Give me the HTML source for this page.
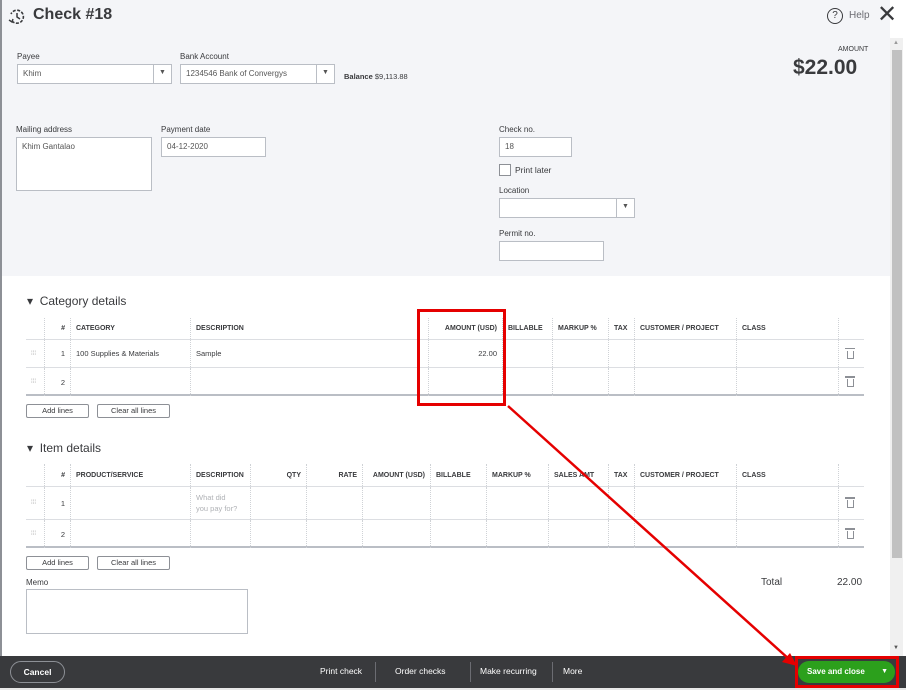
<!DOCTYPE html>
<html><head><meta charset="utf-8"><style>
*{box-sizing:border-box;margin:0;padding:0}
body{width:906px;height:690px;overflow:hidden;background:#fff;font-family:"Liberation Sans",sans-serif;color:#393a3d;position:relative}
.a{position:absolute}
.lbl{position:absolute;font-size:8px;color:#393a3d}
.inp{position:absolute;background:#fff;border:1px solid #babec5;font-size:8px;color:#555;padding:4px 5px}
.dd{position:absolute;top:0;right:0;width:18px;height:100%;border-left:1px solid #babec5;font-size:7px;text-align:center;padding-top:4px}
.tbl{position:absolute;left:26px;width:838px}
.cell{position:absolute;border-left:1px dotted #cfd2d6;height:100%;font-size:7.5px;padding:0 5px;display:flex;align-items:center}
.hd{font-weight:bold;font-size:7px}
.row{position:absolute;left:0;width:838px;border-bottom:1px solid #dcdee2}
.btn{position:absolute;border:1px solid #8d9096;border-radius:2px;font-size:7.5px;text-align:center;line-height:12px;height:14px;background:#fff}
.trash{position:absolute;right:10px;width:7px;height:8px;border:1.5px solid #8d9096;border-top:none;top:50%;margin-top:-3px}
.trash:before{content:"";position:absolute;left:-3px;top:-3px;width:10px;height:1.5px;background:#8d9096}
</style></head><body>
<div class="a" style="left:0;top:0;width:890px;height:276px;background:#f4f5f8"></div>
<div class="a" style="left:0;top:0;width:2px;height:656px;background:#8d9096"></div>
<!-- header -->
<svg class="a" style="left:8px;top:8px" width="18" height="18" viewBox="0 0 18 18"><path d="M4 13 A6.5 6.5 0 1 0 3 6" fill="none" stroke="#393a3d" stroke-width="1.6" stroke-dasharray="3 1.5"/><path d="M9 5v4l3 2" fill="none" stroke="#393a3d" stroke-width="1.5"/><path d="M1 12l3 2 1-3" fill="none" stroke="#393a3d" stroke-width="1.4"/></svg>
<div class="a" style="left:33px;top:6px;font-size:16px;font-weight:bold">Check #18</div>
<div class="a" style="left:827px;top:8px;width:16px;height:16px;border:1.5px solid #393a3d;border-radius:50%;font-size:10px;text-align:center;line-height:13px">?</div>
<div class="a" style="left:849px;top:10px;font-size:10px;color:#6b6c72">Help</div>
<div class="a" style="left:877px;top:2px;font-size:24px;font-weight:300;color:#393a3d;line-height:26px">✕</div>
<div class="a" style="left:838px;top:46px;font-size:7px">AMOUNT</div>
<div class="a" style="left:793px;top:56px;font-size:21px;font-weight:bold">$22.00</div>
<!-- scrollbar -->
<div class="a" style="left:890px;top:38px;width:13px;height:618px;background:#f0f0f0"></div>
<div class="a" style="left:892px;top:50px;width:10px;height:508px;background:#c1c1c1"></div>
<div class="a" style="left:893px;top:40px;font-size:6px;color:#999">▲</div>
<div class="a" style="left:893px;top:645px;font-size:6px;color:#555">▼</div>
<!-- fields -->
<div class="lbl" style="left:17px;top:52px">Payee</div>
<div class="inp" style="left:17px;top:64px;width:155px;height:20px">Khim<div class="dd">▼</div></div>
<div class="lbl" style="left:180px;top:52px">Bank Account</div>
<div class="inp" style="left:180px;top:64px;width:155px;height:20px">1234546 Bank of Convergys<div class="dd">▼</div></div>
<div class="lbl" style="left:344px;top:72px;font-size:7.5px"><b>Balance</b> $9,113.88</div>
<div class="lbl" style="left:16px;top:125px">Mailing address</div>
<div class="inp" style="left:16px;top:137px;width:136px;height:54px">Khim Gantalao</div>
<div class="lbl" style="left:161px;top:125px">Payment date</div>
<div class="inp" style="left:161px;top:137px;width:105px;height:20px">04-12-2020</div>
<div class="lbl" style="left:499px;top:125px">Check no.</div>
<div class="inp" style="left:499px;top:137px;width:73px;height:20px">18</div>
<div class="a" style="left:499px;top:164px;width:12px;height:12px;border:1px solid #8d9096;background:#fff"></div>
<div class="lbl" style="left:515px;top:165px;font-size:8.5px">Print later</div>
<div class="lbl" style="left:499px;top:186px">Location</div>
<div class="inp" style="left:499px;top:198px;width:136px;height:20px"><div class="dd">▼</div></div>
<div class="lbl" style="left:499px;top:229px">Permit no.</div>
<div class="inp" style="left:499px;top:241px;width:105px;height:20px"></div>
<!-- category -->
<div class="a" style="left:27px;top:294px;font-size:12px">▾&nbsp; Category details</div>
<div class="tbl" style="top:318px;height:78px;border-bottom:2px solid #babec5">
 <div class="row" style="top:0;height:22px">
  <div class="cell hd" style="left:18px;width:26px;justify-content:flex-end">#</div>
  <div class="cell hd" style="left:44px;width:120px">CATEGORY</div>
  <div class="cell hd" style="left:164px;width:238px">DESCRIPTION</div>
  <div class="cell hd" style="left:402px;width:74px;justify-content:flex-end">AMOUNT (USD)</div>
  <div class="cell hd" style="left:476px;width:50px">BILLABLE</div>
  <div class="cell hd" style="left:526px;width:56px">MARKUP %</div>
  <div class="cell hd" style="left:582px;width:26px">TAX</div>
  <div class="cell hd" style="left:608px;width:102px">CUSTOMER / PROJECT</div>
  <div class="cell hd" style="left:710px;width:102px">CLASS</div>
  <div class="cell" style="left:812px;width:26px"></div>
 </div>
 <div class="row" style="top:22px;height:28px">
  <div class="cell" style="left:0;width:18px;border:none;color:#aaa;font-size:6px">⁞⁞⁞</div>
  <div class="cell" style="left:18px;width:26px;justify-content:flex-end">1</div>
  <div class="cell" style="left:44px;width:120px">100 Supplies &amp; Materials</div>
  <div class="cell" style="left:164px;width:238px">Sample</div>
  <div class="cell" style="left:402px;width:74px;justify-content:flex-end">22.00</div>
  <div class="cell" style="left:476px;width:50px"></div><div class="cell" style="left:526px;width:56px"></div><div class="cell" style="left:582px;width:26px"></div><div class="cell" style="left:608px;width:102px"></div><div class="cell" style="left:710px;width:102px"></div><div class="cell" style="left:812px;width:26px"><div class="trash"></div></div>
 </div>
 <div class="row" style="top:50px;height:28px;border:none">
  <div class="cell" style="left:0;width:18px;border:none;color:#aaa;font-size:6px">⁞⁞⁞</div>
  <div class="cell" style="left:18px;width:26px;justify-content:flex-end">2</div>
  <div class="cell" style="left:44px;width:120px"></div><div class="cell" style="left:164px;width:238px"></div><div class="cell" style="left:402px;width:74px"></div><div class="cell" style="left:476px;width:50px"></div><div class="cell" style="left:526px;width:56px"></div><div class="cell" style="left:582px;width:26px"></div><div class="cell" style="left:608px;width:102px"></div><div class="cell" style="left:710px;width:102px"></div><div class="cell" style="left:812px;width:26px"><div class="trash"></div></div>
 </div>
</div>
<div class="btn" style="left:26px;top:404px;width:63px">Add lines</div>
<div class="btn" style="left:97px;top:404px;width:73px">Clear all lines</div>
<!-- item -->
<div class="a" style="left:27px;top:441px;font-size:12px">▾&nbsp; Item details</div>
<div class="tbl" style="top:464px;height:84px;border-bottom:2px solid #babec5">
 <div class="row" style="top:0;height:23px">
  <div class="cell hd" style="left:18px;width:26px;justify-content:flex-end">#</div>
  <div class="cell hd" style="left:44px;width:120px">PRODUCT/SERVICE</div>
  <div class="cell hd" style="left:164px;width:60px">DESCRIPTION</div>
  <div class="cell hd" style="left:224px;width:56px;justify-content:flex-end">QTY</div>
  <div class="cell hd" style="left:280px;width:56px;justify-content:flex-end">RATE</div>
  <div class="cell hd" style="left:336px;width:68px;justify-content:flex-end">AMOUNT (USD)</div>
  <div class="cell hd" style="left:404px;width:56px">BILLABLE</div>
  <div class="cell hd" style="left:460px;width:62px">MARKUP %</div>
  <div class="cell hd" style="left:522px;width:60px">SALES AMT</div>
  <div class="cell hd" style="left:582px;width:26px">TAX</div>
  <div class="cell hd" style="left:608px;width:102px">CUSTOMER / PROJECT</div>
  <div class="cell hd" style="left:710px;width:102px">CLASS</div>
  <div class="cell" style="left:812px;width:26px"></div>
 </div>
 <div class="row" style="top:23px;height:33px">
  <div class="cell" style="left:0;width:18px;border:none;color:#aaa;font-size:6px">⁞⁞⁞</div>
  <div class="cell" style="left:18px;width:26px;justify-content:flex-end">1</div>
  <div class="cell" style="left:44px;width:120px"></div>
  <div class="cell" style="left:164px;width:60px;color:#b0b2b6;line-height:11px">What did<br>you pay for?</div>
  <div class="cell" style="left:224px;width:56px"></div><div class="cell" style="left:280px;width:56px"></div><div class="cell" style="left:336px;width:68px"></div><div class="cell" style="left:404px;width:56px"></div><div class="cell" style="left:460px;width:62px"></div><div class="cell" style="left:522px;width:60px"></div><div class="cell" style="left:582px;width:26px"></div><div class="cell" style="left:608px;width:102px"></div><div class="cell" style="left:710px;width:102px"></div><div class="cell" style="left:812px;width:26px"><div class="trash"></div></div>
 </div>
 <div class="row" style="top:56px;height:28px;border:none">
  <div class="cell" style="left:0;width:18px;border:none;color:#aaa;font-size:6px">⁞⁞⁞</div>
  <div class="cell" style="left:18px;width:26px;justify-content:flex-end">2</div>
  <div class="cell" style="left:44px;width:120px"></div><div class="cell" style="left:164px;width:60px"></div><div class="cell" style="left:224px;width:56px"></div><div class="cell" style="left:280px;width:56px"></div><div class="cell" style="left:336px;width:68px"></div><div class="cell" style="left:404px;width:56px"></div><div class="cell" style="left:460px;width:62px"></div><div class="cell" style="left:522px;width:60px"></div><div class="cell" style="left:582px;width:26px"></div><div class="cell" style="left:608px;width:102px"></div><div class="cell" style="left:710px;width:102px"></div><div class="cell" style="left:812px;width:26px"><div class="trash"></div></div>
 </div>
</div>
<div class="btn" style="left:26px;top:556px;width:63px">Add lines</div>
<div class="btn" style="left:97px;top:556px;width:73px">Clear all lines</div>
<div class="lbl" style="left:26px;top:578px">Memo</div>
<div class="inp" style="left:26px;top:589px;width:222px;height:45px"></div>
<div class="a" style="left:761px;top:577px;font-size:10px">Total</div>
<div class="a" style="left:837px;top:577px;font-size:10px">22.00</div>
<!-- footer -->
<div class="a" style="left:0;top:656px;width:906px;height:32px;background:#393a3d"></div>
<div class="a" style="left:0;top:688px;width:906px;height:2px;background:#e8e8e8"></div>
<div class="a" style="left:10px;top:661px;width:55px;height:22px;border:1px solid #8d9096;border-radius:11px;color:#fff;font-size:8.5px;font-weight:bold;text-align:center;line-height:20px">Cancel</div>
<div class="a" style="left:320px;top:666px;color:#fff;font-size:8.5px">Print check</div>
<div class="a" style="left:375px;top:662px;width:1px;height:20px;background:#6b6c72"></div>
<div class="a" style="left:395px;top:666px;color:#fff;font-size:8.5px">Order checks</div>
<div class="a" style="left:470px;top:662px;width:1px;height:20px;background:#6b6c72"></div>
<div class="a" style="left:480px;top:666px;color:#fff;font-size:8.5px">Make recurring</div>
<div class="a" style="left:552px;top:662px;width:1px;height:20px;background:#6b6c72"></div>
<div class="a" style="left:563px;top:666px;color:#fff;font-size:8.5px">More</div>
<div class="a" style="left:798px;top:661px;width:97px;height:22px;background:#2ca01c;border-radius:11px;color:#fff;font-size:8px;font-weight:bold;line-height:22px;padding-left:9px">Save and close<span style="position:absolute;right:7px;font-size:7px">▼</span></div>
<!-- annotations -->
<div class="a" style="left:417px;top:309px;width:89px;height:97px;border:3px solid #e50000"></div>
<div class="a" style="left:795px;top:656px;width:104px;height:32px;border:3px solid #e50000"></div>
<svg class="a" style="left:0;top:0" width="906" height="690"><line x1="508" y1="406" x2="790" y2="660" stroke="#e50000" stroke-width="2.5"/><polygon points="797,666 782,662 790,653" fill="#e50000"/></svg>
</body></html>
